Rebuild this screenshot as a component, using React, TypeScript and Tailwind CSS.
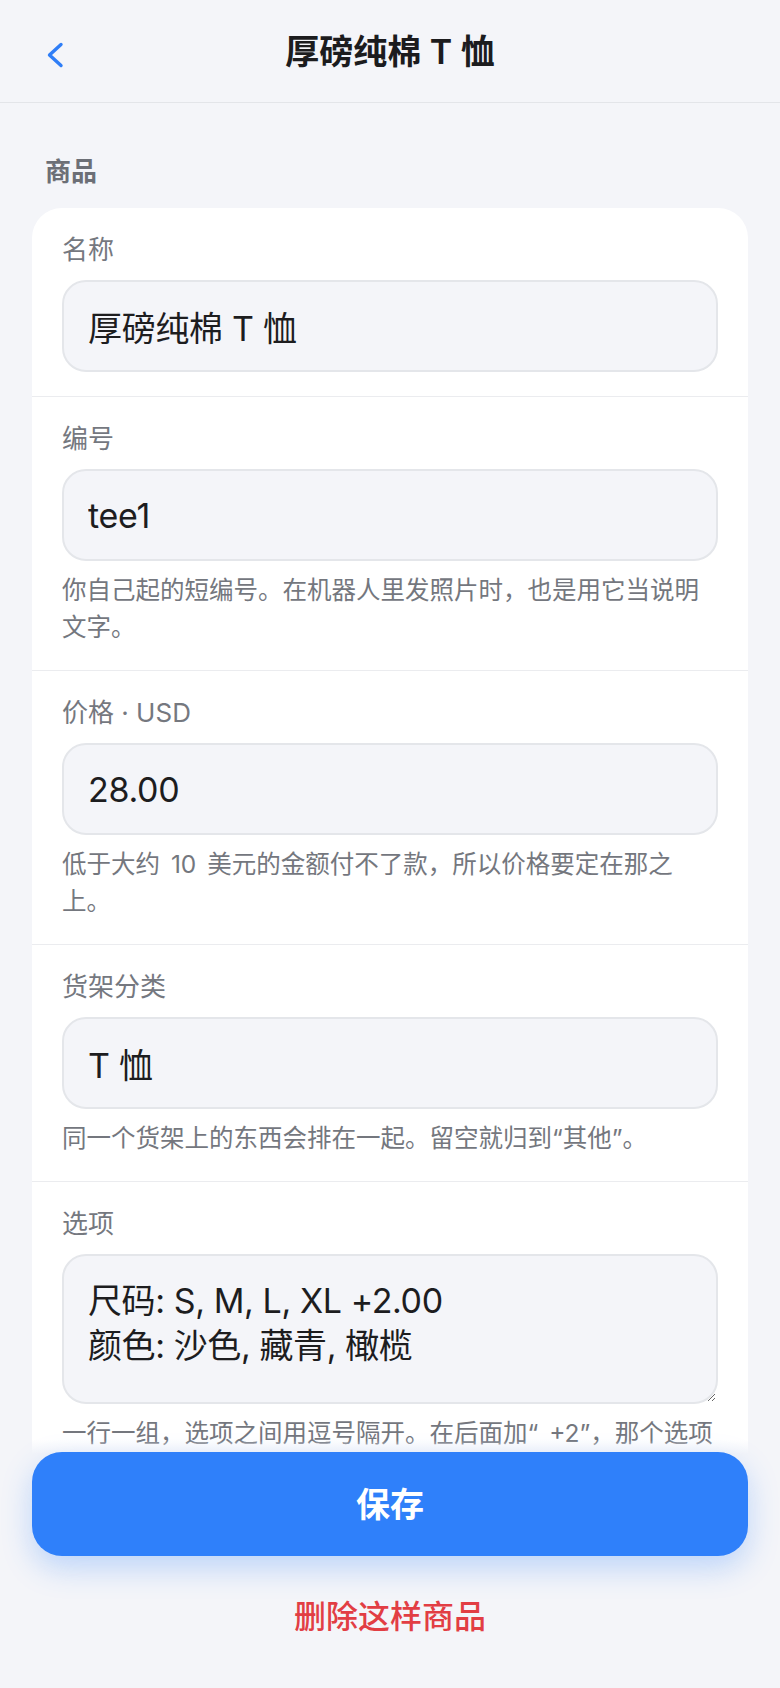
import React from "react";

const font = "font-['Inter','Noto_Sans_CJK_SC',sans-serif]";

interface FieldProps {
  label: string;
  value?: string;
  hint?: string;
  multiline?: boolean;
}

const Field = ({ label, value, hint, multiline }: FieldProps) => {
  return (
    <div className="px-[30px] pt-6 pb-6 border-b border-[#ebecef] last:border-b-0">
      <label className="block text-[26px] leading-[36px] text-[#75787f]">{label}</label>
      {multiline ? (
        <textarea
          defaultValue={value}
          className="mt-3 block w-full h-[150px] rounded-[24px] border-2 border-[#e4e6ea] bg-[#f4f5f9] px-6 py-[22px] text-[34px] leading-[45px] tracking-[-0.4px] text-[#1d1d1f] outline-none resize-y"
        />
      ) : (
        <input
          defaultValue={value}
          className="mt-3 block w-full h-[92px] rounded-[24px] border-2 border-[#e4e6ea] bg-[#f4f5f9] px-6 text-[34px] tracking-[-0.3px] text-[#1d1d1f] outline-none"
        />
      )}
      {hint && (
        <p className="mt-[11px] text-[24.5px] leading-[37px] text-[#74777e] [word-spacing:4px]">{hint}</p>
      )}
    </div>
  );
};

export default function App() {
  return (
    <div className={`${font} relative h-screen overflow-hidden bg-[#f4f5f9] flex flex-col`}>
      <header className="h-[103px] shrink-0 grid grid-cols-[1fr_auto_1fr] items-center px-[46px] border-b border-[#e3e5e9]">
        <button className="justify-self-start mt-[8px]" aria-label="返回">
          <svg width="18" height="26" viewBox="0 0 18 26" fill="none">
            <polyline
              points="15,2.5 3.5,13 15,23.5"
              stroke="#2f7ef7"
              strokeWidth="3.4"
              strokeLinecap="round"
              strokeLinejoin="round"
            />
          </svg>
        </button>
        <h1 className="text-[34px] font-semibold text-[#1c1c1e]">厚磅纯棉 T 恤</h1>
        <div />
      </header>

      <main className="flex-1 overflow-y-auto px-[32px] pt-[51px] pb-[280px]">
        <h2 className="pl-[13px] mb-[18px] text-[26px] leading-[36px] font-semibold text-[#6c6f76]">商品</h2>
        <div className="rounded-[30px] bg-white">
          <Field label="名称" value="厚磅纯棉 T 恤" />
          <Field
            label="编号"
            value="tee1"
            hint="你自己起的短编号。在机器人里发照片时，也是用它当说明文字。"
          />
          <Field
            label="价格 · USD"
            value="28.00"
            hint="低于大约 10 美元的金额付不了款，所以价格要定在那之上。"
          />
          <Field
            label="货架分类"
            value="T 恤"
            hint="同一个货架上的东西会排在一起。留空就归到“其他”。"
          />
          <Field
            label="选项"
            multiline
            value={"尺码: S, M, L, XL +2.00\n颜色: 沙色, 藏青, 橄榄"}
            hint="一行一组，选项之间用逗号隔开。在后面加“ +2”，那个选项就会贵 2 美元。"
          />
        </div>
      </main>

      <div className="absolute inset-x-0 bottom-0 pt-[12px] pb-[49px] bg-[linear-gradient(to_bottom,rgba(244,245,249,0)_0px,#f4f5f9_14px)] flex flex-col items-center">
        <button className="w-[716px] h-[104px] rounded-[30px] bg-[#2f80fa] text-white text-[34px] font-semibold shadow-[0_12px_30px_rgba(47,128,250,0.28)]">
          保存
        </button>
        <button className="mt-[39px] text-[32px] leading-[44px] font-medium text-[#e23e44]">删除这样商品</button>
      </div>
    </div>
  );
}
